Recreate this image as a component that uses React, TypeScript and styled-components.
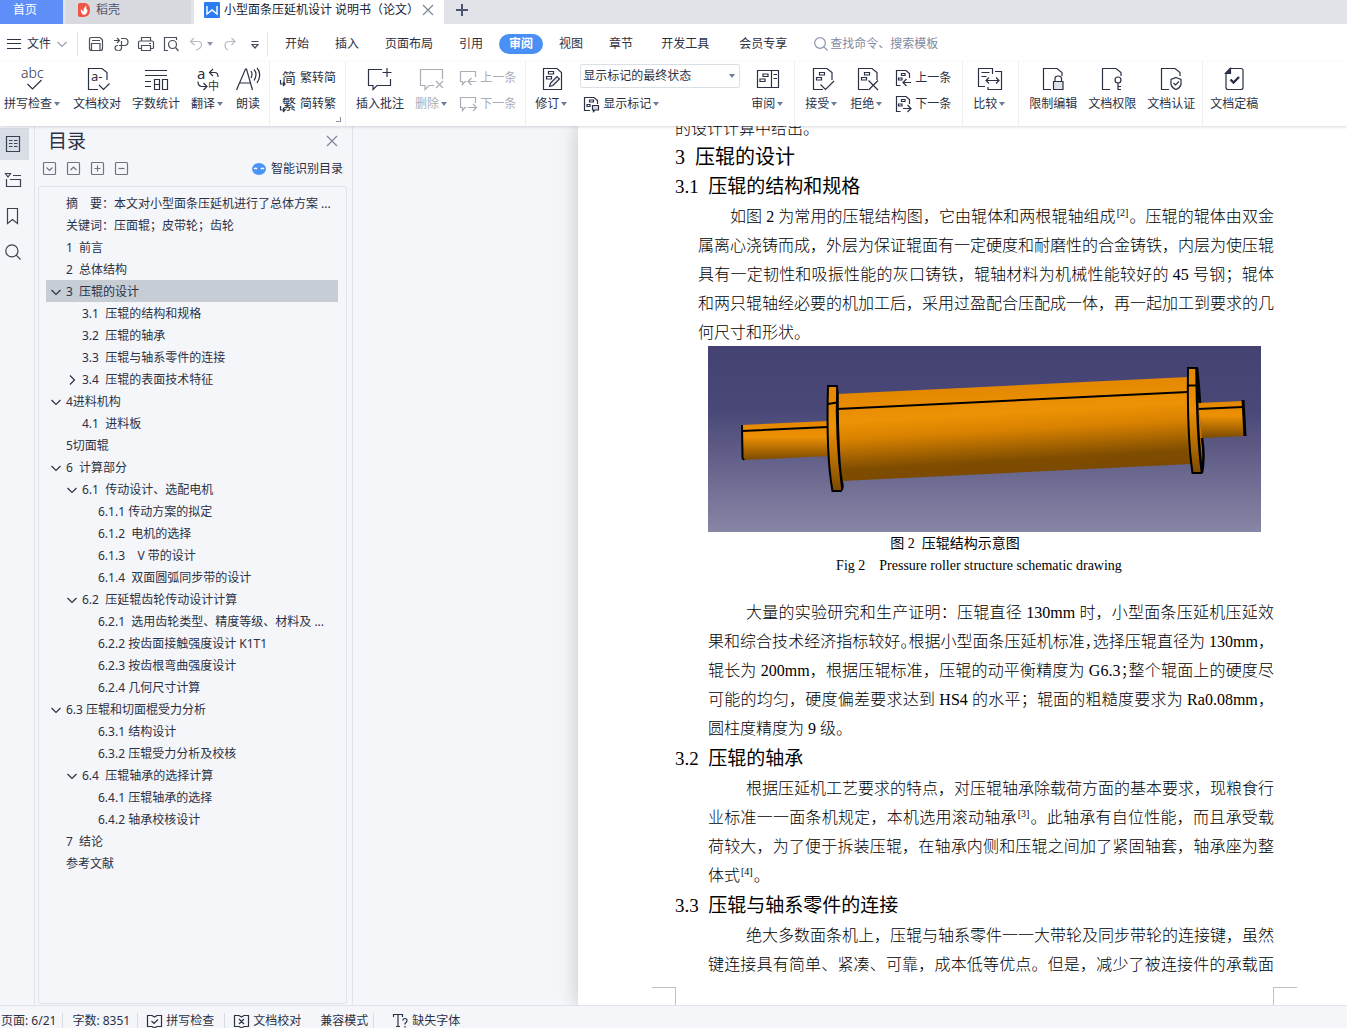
import React from "react";
import styled, { createGlobalStyle, css } from "styled-components";

const ink = "#2b3145";
const uiFont = `"Noto Sans", "Noto Sans CJK SC", sans-serif`;
const docFont = `"Liberation Serif", "Noto Sans CJK SC", serif`;

const Global = createGlobalStyle`
  * { box-sizing: border-box; }
  body { margin: 0; background: #f5f6f9; color: ${ink}; font: 12px/16px ${uiFont}; }
  button, input, select { font: inherit; color: inherit; }
  button { border: 0; padding: 0; background: none; white-space: nowrap; }
  svg { display: block; flex: none; overflow: visible; }
`;

/* ---------- icons ---------- */

type IconProps = { size?: number; w?: number; h?: number; color?: string; children: React.ReactNode };
const Icon = ({ size = 24, w, h, color = "currentColor", children }: IconProps) => (
  <svg width={w ?? size} height={h ?? size} viewBox={`0 0 ${w ?? size} ${h ?? size}`} fill="none" stroke={color} strokeWidth="1.2" aria-hidden="true">
    {children}
  </svg>
);

const IconText = styled.text<{ $size: number; $weight?: number }>`
  font-family: ${uiFont};
  font-size: ${(p) => p.$size}px;
  font-weight: ${(p) => p.$weight ?? 400};
  fill: currentColor;
  stroke: none;
`;

const Caret = ({ color = "#6f7c95" }: { color?: string }) => (
  <svg width="6" height="4" viewBox="0 0 6 4" aria-hidden="true">
    <path d="M0 0h6L3 4z" fill={color} />
  </svg>
);

const OpenPage = <path d="M13 22.5H3.5V1.5H17L22 5.5V13" />;
const Marks = (
  <>
    <path d="M9.5 5.5h5v2.500h-5zM6.500 10.500h5v2.500h-5z" />
  </>
);

const SpellIcon = () => (
  <Icon>
    <IconText $size={14} $weight={300} x="0" y="11">abc</IconText>
    <path d="M6.500 17l5 5 9-9" />
  </Icon>
);
const ProofIcon = () => (
  <Icon>
    {OpenPage}
    <IconText $size={13} x="6" y="14">a-</IconText>
    <path d="M14 18l4.500 4.500 6-6" />
  </Icon>
);
const CountIcon = () => (
  <Icon>
    <path d="M1 3.500h22M1 8.500h22M1 14.500h6M1 19.500h6M10.500 12.500h5v10h-5zM10.500 17.500h5M18.500 12.500h5v10h-5z" />
  </Icon>
);
const TranslateIcon = () => (
  <Icon>
    <IconText $size={15} x="1" y="12">a</IconText>
    <IconText $size={11} x="12" y="23">中</IconText>
    <path d="M17 2l-3.500 3.500L17 9M13.500 5.500H19q3 0 3 4.500M2 14.500q0 5 4 5h4M7.500 16l3.500 3.500L7.500 23" />
  </Icon>
);
const ReadIcon = () => (
  <Icon>
    <path d="M.5 23L9.500 2h1L16.500 23M4 16h10.500" />
    <path d="M15 4q2 3 0 7M18 2.500q4 4.500 0 11M21 1q5.500 6 0 15" />
  </Icon>
);
const HanIcon = ({ glyph }: { glyph: string }) => (
  <Icon size={16}>
    <IconText $size={14} x="2" y="13">{glyph}</IconText>
    <path d="M.5 10v4h4M3 12l2 2-2 2" />
  </Icon>
);
const NoteAddIcon = () => (
  <Icon>
    <path d="M14 2.500H.5V18.500H5V22.500L9 18.500H22.500V12M19 1v9M14.500 5.500h9" />
  </Icon>
);
const NoteDeleteIcon = () => (
  <Icon>
    <path d="M22.500 12V2.500H.5V18.500H5V22.500L9 18.500H14M16 14l7 7M23 14l-7 7" />
  </Icon>
);
const NoteStepIcon = ({ next }: { next?: boolean }) => (
  <Icon size={16}>
    <path d="M15.500 7V1.500H.5V11.500H2.500V14.500L5 11.500H6.500" />
    {next ? <path d="M8 11.500h8M13 8l3.500 3.500L13 15" /> : <path d="M8 11.500h8M11.500 8L8 11.500 11.500 15" />}
  </Icon>
);
const ReviseIcon = () => (
  <Icon>
    <path d="M3.500 1.500H17L21.500 5.500V22.500H3.500zM8.500 4.500h5v2.500h-5zM6.500 9.500h5v2.500h-5z" />
    <path d="M9.500 19.500l1-3.500 6.500-6.500 2.500 2.500-6.500 6.500z" fill="#e4e6ea" />
  </Icon>
);
const ShowMarksIcon = () => (
  <Icon size={16}>
    <path d="M7 14.500H1.500V1.500H11L14.500 4.500V8M6.500 4h4v2h-4zM4 8.500h3v2H4z" />
    <path d="M9.500 9.500h6v4.500H12l-1.500 1.500V14h-1z" fill="#d5d8de" />
  </Icon>
);
const PaneIcon = () => (
  <Icon>
    <path d="M1.500 3.500h21v17h-21zM15.500 3.500v17M17.500 7.500h3.500M17.500 11.500h3.500M7 7h5v2.500H7zM4 12h5v2.500H4z" />
  </Icon>
);
const AcceptIcon = () => (
  <Icon>
    <g>{OpenPage}{Marks}</g>
    <path d="M10.500 17.500l5 5 8.500-8.500" />
  </Icon>
);
const RejectIcon = () => (
  <Icon>
    <g>{OpenPage}{Marks}</g>
    <path d="M13.500 13.500l9.500 9.500M23 13.500l-9.500 9.500" />
  </Icon>
);
const PageStepIcon = ({ next }: { next?: boolean }) => (
  <Icon size={16}>
    <path d="M5.500 15.500H1.500V.5H11L14.500 3.500V8M6.500 3.500h3.500v2H6.500zM3.500 8h3.500v2H3.500z" />
    {next ? <path d="M8 12.500h7.500M12.500 9l3.500 3.500-3.500 3.500" /> : <path d="M8 12.500h8M11.500 9L8 12.500l3.500 3.500" />}
  </Icon>
);
const CompareIcon = () => (
  <Icon>
    <path d="M14.500 7V1.500H.5V19.500H7M10 20v2.500H23.500V4.500H17M3.500 5.500h8M3.500 9.500h5" />
    <path d="M8.500 13.500h12M11 10.500l-3 3 3 3M18 10.500l3 3-3 3" />
  </Icon>
);
const BarePage = <path d="M10 22.500H2.500V1.500H16L21 5.500V9" />;
const LockIcon = () => (
  <Icon>
    {BarePage}
    <path d="M12.500 14.500h9.500v8h-9.500z" fill="#dfe2e6" />
    <path d="M14 14.500v-3q0-2.500 3.200-2.500t3.300 2.500v3" />
  </Icon>
);
const KeyIcon = () => (
  <Icon>
    {BarePage}
    <circle cx="18" cy="13" r="3" />
    <path d="M18 16v6.500h3M18 19.500h3" />
  </Icon>
);
const CertIcon = () => (
  <Icon>
    {BarePage}
    <path d="M17 10.500l5 2v5q-1 3.500-5 5-4-1.500-5-5v-5zM14.500 16l2 2 3.500-3.500" />
  </Icon>
);
const FinalIcon = () => (
  <Icon>
    <path d="M8 1.500H19q2 0 2 2V20.500q0 2-2 2H6q-2 0-2-2V6z" />
    <path d="M8.500 1.500V6.500H3.500z" fill={ink} />
    <path d="M8.500 12.500l3 3 5.500-5.500" strokeWidth="2.400" />
  </Icon>
);

const MenuIcon = () => (
  <Icon w={14} h={12}><path d="M0 1.500h14M0 5.500h14M0 10.500h14" /></Icon>
);
const Chevron = ({ dir = "down", color }: { dir?: "down" | "right"; color?: string }) => (
  <Icon w={10} h={10} color={color}>
    {dir === "down" ? <path d="M.5 3L5 7.500 9.500 3" /> : <path d="M3 .5L7.500 5 3 9.500" />}
  </Icon>
);
const SaveIcon = () => (
  <Icon size={16}><path d="M1.500 3.500q0-2 2-2H12l2.500 2.500V12.500q0 2-2 2h-9q-2 0-2-2zM3.500 14V7.500H12V14M4 4.500h8" /></Icon>
);
const ExportIcon = () => (
  <Icon size={16}><path d="M1 4.500h5M4 2l2.500 2.500L4 7M8 2.500h3.500q3.500 0 3.500 3.500t-3.500 3.500H6M5 14.500q-3 0-3-2.500t3-2.500M8.500 5v7q0 2.500-3 2.500" /></Icon>
);
const PrintIcon = () => (
  <Icon size={16}><path d="M3.500 5V1.500h9V5M3.500 12.500h-2q-1 0-1-1V6.500q0-1.500 1.500-1.500h12q1.500 0 1.500 1.500v5q0 1-1 1h-2M3.500 9.500h9v5h-9zM11 7.500h2" /></Icon>
);
const PreviewIcon = () => (
  <Icon size={16}><path d="M5 14.500H1.500V1.500H13.500V4" /><circle cx="9.500" cy="8.500" r="4" /><path d="M12.500 11.500l3 3.500" /></Icon>
);
const UndoIcon = () => (
  <Icon size={16} color="#b9bcc4"><path d="M6 2L2.500 5.500 6.500 9M2.500 5.500H10q3.500 0 3.500 3.500T8 14" /></Icon>
);
const RedoIcon = () => (
  <Icon size={16} color="#b9bcc4"><path d="M9.500 2L13 5.500 9.500 9M13 5.500H7q-4 0-4 4 0 3 3 4.500" /></Icon>
);
const MoreIcon = () => (
  <Icon size={16}><path d="M4.500 5.500h7M5 8.500h6L8 12z" /></Icon>
);
const SearchIcon = ({ size = 16, color }: { size?: number; color?: string }) => (
  <Icon size={size} color={color}>
    <circle cx={size * 0.43} cy={size * 0.43} r={size * 0.38} />
    <path d={`M${size * 0.7} ${size * 0.7}L${size - 0.5} ${size - 0.5}`} />
  </Icon>
);
const CloseIcon = ({ color = "#7e8798" }: { color?: string }) => (
  <Icon size={10} color={color}><path d="M0 0l10 10M10 0L0 10" /></Icon>
);

/* ---------- shell ---------- */

const Shell = styled.div`
  display: flex;
  flex-direction: column;
  height: 100vh;
  overflow: hidden;
`;

const TabStrip = styled.header`
  display: flex;
  gap: 3px;
  flex: none;
  height: 24px;
  background: #e2e3e8;
`;

const DocTab = styled.button<{ $kind: "home" | "idle" | "active" }>`
  display: flex;
  align-items: center;
  gap: 6px;
  padding: 0 12px 4px;
  ${(p) => p.$kind === "home" && css`width: 63px; padding-left: 13px; background: #5f8ef8; color: #fff;`}
  ${(p) => p.$kind === "idle" && css`width: 125px; background: #d9dae0; color: #50566a;`}
  ${(p) => p.$kind === "active" && css`width: 250px; padding: 0 10px 4px; gap: 4px; background: #fff; color: #1b2130;`}
`;

const NewTab = styled.button`
  padding: 0 9px 5px;
  color: #4a5570;
`;

const MenuBar = styled.div`
  display: flex;
  align-items: center;
  flex: none;
  height: 38px;
  padding: 2px 0 0 7px;
  background: #fff;
`;

const FileButton = styled.button`
  display: flex;
  align-items: center;
  gap: 6px;
`;

const BarRule = styled.span<{ $gap: number }>`
  width: 1px;
  height: 24px;
  margin: 0 ${(p) => p.$gap}px;
  background: #e0e2e6;
`;

const QuickTools = styled.div`
  display: flex;
  align-items: center;
  gap: 9px;
  color: #4a4f5c;
`;

const UndoGroup = styled.button`
  display: flex;
  align-items: center;
  gap: 3px;
`;

const MenuTab = styled.button<{ $active?: boolean; $wide?: boolean }>`
  padding: 0 ${(p) => (p.$wide ? 15 : 13)}px;
  line-height: 20px;
  ${(p) => p.$active && css`
    margin: 0 3px;
    padding: 0 10px;
    border-radius: 10px;
    background: #4a8ff3;
    color: #fff;
    font-weight: 700;
  `}
`;

const SearchField = styled.label`
  display: flex;
  align-items: center;
  gap: 2px;
  flex: 1;
  min-width: 0;
  margin-left: 12px;
  color: #8b97ad;
`;

const SearchInput = styled.input`
  flex: 1;
  min-width: 0;
  padding: 0;
  border: 0;
  outline: 0;
  background: none;
  &::placeholder { color: #7f8ba3; opacity: 1; }
`;

/* ---------- ribbon ---------- */

const Ribbon = styled.div`
  display: flex;
  position: relative;
  z-index: 1;
  flex: none;
  height: 64px;
  background: #fff;
  box-shadow: 0 1px 3px rgba(60, 66, 80, 0.2);
`;

const Group = styled.div<{ $start?: number; $end?: number }>`
  display: flex;
  gap: 11px;
  position: relative;
  padding: 0 ${(p) => p.$end ?? 9}px 0 ${(p) => p.$start ?? 10}px;
  border-right: 1px solid #eceef1;
  &:last-child { border-right: 0; }
`;

const Corner = styled.span`
  position: absolute;
  right: 4px;
  bottom: 4px;
  width: 5px;
  height: 5px;
  border: solid #8a92a3;
  border-width: 0 1px 1px 0;
`;

const BigButton = styled.button`
  display: flex;
  flex-direction: column;
  align-items: center;
  gap: 5px;
  padding-top: 5px;
  &:disabled { color: #a9adb6; }
`;

const Label = styled.span<{ $menu?: boolean }>`
  display: flex;
  align-items: center;
  gap: 2px;
  padding-right: ${(p) => (p.$menu ? 2 : 0)}px;
`;

const Stack = styled.div`
  display: flex;
  flex-direction: column;
  padding-top: 2px;
`;

const SmallButton = styled.button`
  display: flex;
  align-items: center;
  gap: 4px;
  height: 26px;
  padding-top: 2px;
  &:disabled { color: #a9adb6; }
`;

const SelectBox = styled.div`
  display: grid;
  align-items: center;
  width: 160px;
  height: 24px;
  margin-bottom: 2px;
  border: 1px solid #dcdfe4;
  border-radius: 2px;
  > * { grid-area: 1 / 1; }
  > svg { justify-self: end; margin-right: 4px; pointer-events: none; }
`;

const Select = styled.select`
  appearance: none;
  width: 100%;
  padding: 0 12px 0 2px;
  border: 0;
  background: none;
  outline: 0;
`;

const MarksButton = styled(SmallButton)`
  padding-left: 3px;
`;

type BigProps = { icon: React.ReactNode; text: string; menu?: boolean; disabled?: boolean };
const Big = ({ icon, text, menu, disabled }: BigProps) => (
  <BigButton disabled={disabled}>
    {icon}
    <Label $menu={menu}>
      {text}
      {menu && <Caret />}
    </Label>
  </BigButton>
);

/* ---------- side ---------- */

const Work = styled.main`
  display: flex;
  flex: 1;
  min-height: 0;
`;

const Rail = styled.nav`
  display: flex;
  flex-direction: column;
  gap: 4px;
  flex: none;
  width: 35px;
  padding-top: 2px;
  border-right: 1px solid #e0e3e9;
`;

const RailButton = styled.button<{ $active?: boolean }>`
  display: flex;
  align-items: center;
  width: 29px;
  height: 32px;
  padding-left: 5px;
  color: #3b4254;
  background: ${(p) => (p.$active ? "#d9dde5" : "transparent")};
`;

const Panel = styled.aside`
  display: flex;
  flex-direction: column;
  flex: none;
  width: 318px;
  padding: 0 5px 0 3px;
  border-right: 1px solid #e0e3e9;
`;

const PanelHead = styled.div`
  display: flex;
  align-items: center;
  justify-content: space-between;
  height: 30px;
  padding: 0 10px;
`;

const PanelTitle = styled.h2`
  margin: 0;
  font-size: 19px;
  line-height: 30px;
  font-weight: 400;
`;

const PanelTools = styled.div`
  display: flex;
  align-items: center;
  gap: 11px;
  height: 24px;
  margin-bottom: 6px;
  padding: 0 4px 0 5px;
  color: #6d7585;
`;

const SmartButton = styled.button`
  display: flex;
  align-items: center;
  gap: 5px;
  margin-left: auto;
  padding-top: 1px;
  color: ${ink};
`;

const Tree = styled.ul`
  flex: 1;
  min-height: 0;
  margin: 0 0 1px;
  padding: 5px 8px 0 7px;
  border: 1px solid #e0e3e9;
  border-radius: 3px;
  list-style: none;
  overflow: hidden;
`;

const TreeItem = styled.button<{ $level: number; $active?: boolean }>`
  display: flex;
  align-items: center;
  gap: 5px;
  width: 100%;
  height: 22px;
  padding: 2px 0 0 ${(p) => 5 + p.$level * 16}px;
  white-space: pre;
  background: ${(p) => (p.$active ? "#c6cdd5" : "transparent")};
`;

const Twist = styled.span`
  width: 10px;
  height: 10px;
`;

/* ---------- document ---------- */

const Canvas = styled.section`
  display: flex;
  flex: 1;
  min-width: 0;
  padding-left: 225px;
  overflow: hidden;
`;

const Paper = styled.article`
  flex: 1;
  min-width: 0;
  padding: 0 73px 0 97px;
  background: #fff;
  box-shadow: 0 0 18px rgba(70, 76, 88, 0.3);
  color: #000;
  font-family: ${docFont};
`;

const Chapter = styled.h1`
  margin: 0;
  font-size: 20px;
  line-height: 28px;
  font-weight: 400;
  white-space: pre;
`;

const Section = styled.h2`
  margin: 1px 0 0;
  font-size: 19px;
  line-height: 30px;
  font-weight: 400;
  white-space: pre;
`;

const Para = styled.p<{ $inset: number }>`
  margin: 0 0 0 ${(p) => p.$inset}px;
  font-size: 16px;
  line-height: 29px;
  font-weight: 300;
`;

const Carried = styled(Para)`
  margin-top: -12px;
`;

const Line = styled.span<{ $indent?: number; $last?: boolean }>`
  display: block;
  height: 29px;
  padding-left: ${(p) => p.$indent ?? 0}px;
  white-space: nowrap;
  text-align: justify;
  text-align-last: ${(p) => (p.$last ? "left" : "justify")};
`;

const Tight = styled.span`
  font-feature-settings: "halt";
`;

const Ref = styled.sup`
  padding: 0 1px;
  font-size: 10px;
  line-height: 10px;
  vertical-align: 6px;
`;

const Figure = styled.figure`
  margin: -1px 0 21px 33px;
  font-size: 14px;
  line-height: 22px;
`;

const Caption = styled.figcaption`
  display: flex;
  flex-direction: column;
  align-items: center;
  width: 542px;
  max-width: 100%;
  padding-top: 1px;
  white-space: pre;
`;

const CaptionCn = styled.span`
  padding-right: 48px;
`;

const CropMarks = styled.div`
  display: flex;
  justify-content: space-between;
  margin: 8px -23px 0;
`;

const Crop = styled.span<{ $side: "left" | "right" }>`
  width: 24px;
  height: 20px;
  border-top: 1px solid #bfc1c5;
  border-${(p) => (p.$side === "left" ? "right" : "left")}: 1px solid #bfc1c5;
`;

const Roller = () => (
  <svg width="553" height="186" viewBox="0 0 553 186" role="img" aria-label="压辊结构示意图">
    <defs>
      <linearGradient id="sky" x1="0" y1="0" x2="0" y2="1">
        <stop offset="0" stopColor="#434272" />
        <stop offset="0.35" stopColor="#4a4877" />
        <stop offset="1" stopColor="#8886a5" />
      </linearGradient>
      <linearGradient id="drum" gradientUnits="userSpaceOnUse" x1="303" y1="40" x2="308" y2="127">
        <stop offset="0" stopColor="#e38800" />
        <stop offset="0.3" stopColor="#ee9205" />
        <stop offset="0.5" stopColor="#d98200" />
        <stop offset="0.85" stopColor="#7f4d00" />
        <stop offset="1" stopColor="#7b4a00" />
      </linearGradient>
      <linearGradient id="shaft" x1="0" y1="0" x2="0" y2="1">
        <stop offset="0" stopColor="#e38800" />
        <stop offset="0.4" stopColor="#ec9004" />
        <stop offset="1" stopColor="#7b4a00" />
      </linearGradient>
    </defs>
    <path d="M0 0h553v186H0z" fill="url(#sky)" />
    <path d="M34 79L120 75 121 110 36 114z" fill="url(#shaft)" />
    <path d="M34 79L34.500 112 36 114M34 85L120 81" stroke="#000" strokeWidth="2" fill="none" />
    <path d="M490 57L535 55 537 90 494 92z" fill="url(#shaft)" />
    <path d="M490 63L535 61" stroke="#000" strokeWidth="2" />
    <path d="M535 54L537 90" stroke="#000" strokeWidth="3" />
    <path d="M129 48L480 31 483 118 134 135z" fill="url(#drum)" />
    <path d="M129 63L480 46" stroke="#000" strokeWidth="2" />
    <path d="M120 40H129L129 63 131 100 134 145H125Q119 115 120 40z" fill="url(#shaft)" />
    <path d="M129 40H120Q118 110 124.500 145H133M120 58L129 56.500" stroke="#000" strokeWidth="2" fill="none" />
    <path d="M129 39Q127 90 134 144 136 140 134 135 130 110 130 48z" fill="#000" stroke="#000" strokeWidth="1.500" />
    <path d="M480 22H489L490 58 495 100V126L484 128 481 90z" fill="url(#shaft)" />
    <path d="M489 22H480Q479 90 484.500 127H494M480 39.500H489" stroke="#000" strokeWidth="2" fill="none" />
    <path d="M488.500 21Q489 90 494 127 497 110 494 92M489 22Q491 40 492 57" stroke="#000" strokeWidth="2.500" fill="none" />
  </svg>
);

/* ---------- status ---------- */

const StatusBar = styled.footer`
  display: flex;
  flex: none;
  height: 23px;
  padding: 7px 0 0 1px;
  border-top: 1px solid #e0e3e9;
  background: #f5f6f9;
`;

const StatusItem = styled.button<{ $before?: number; $after?: number; $rule?: boolean }>`
  display: flex;
  align-items: center;
  gap: 4px;
  height: 15px;
  padding: 0 ${(p) => p.$after ?? 10}px 0 ${(p) => p.$before ?? 9}px;
  border-right: ${(p) => (p.$rule ? "1px solid #d9dce2" : "0")};
`;

const entries: { level: number; text: string; twist?: "down" | "right"; active?: boolean }[] = [
  { level: 0, text: "摘　要：本文对小型面条压延机进行了总体方案 ..." },
  { level: 0, text: "关键词：压面辊；皮带轮；齿轮" },
  { level: 0, text: "1  前言" },
  { level: 0, text: "2  总体结构" },
  { level: 0, text: "3  压辊的设计", twist: "down", active: true },
  { level: 1, text: "3.1  压辊的结构和规格" },
  { level: 1, text: "3.2  压辊的轴承" },
  { level: 1, text: "3.3  压辊与轴系零件的连接" },
  { level: 1, text: "3.4  压辊的表面技术特征", twist: "right" },
  { level: 0, text: "4进料机构", twist: "down" },
  { level: 1, text: "4.1  进料板" },
  { level: 0, text: "5切面辊" },
  { level: 0, text: "6  计算部分", twist: "down" },
  { level: 1, text: "6.1  传动设计、选配电机", twist: "down" },
  { level: 2, text: "6.1.1 传动方案的拟定" },
  { level: 2, text: "6.1.2  电机的选择" },
  { level: 2, text: "6.1.3    V 带的设计" },
  { level: 2, text: "6.1.4  双面圆弧同步带的设计" },
  { level: 1, text: "6.2  压延辊齿轮传动设计计算", twist: "down" },
  { level: 2, text: "6.2.1  选用齿轮类型、精度等级、材料及 ..." },
  { level: 2, text: "6.2.2 按齿面接触强度设计 K1T1" },
  { level: 2, text: "6.2.3 按齿根弯曲强度设计" },
  { level: 2, text: "6.2.4 几何尺寸计算" },
  { level: 0, text: "6.3 压辊和切面棍受力分析", twist: "down" },
  { level: 2, text: "6.3.1 结构设计" },
  { level: 2, text: "6.3.2 压辊受力分析及校核" },
  { level: 1, text: "6.4  压辊轴承的选择计算", twist: "down" },
  { level: 2, text: "6.4.1 压辊轴承的选择" },
  { level: 2, text: "6.4.2 轴承校核设计" },
  { level: 0, text: "7  结论" },
  { level: 0, text: "参考文献" },
];

const boxGlyphs = [
  ["全部展开", "M3.500 5.500l3 3 3-3"],
  ["全部收起", "M3.500 8l3-3 3 3"],
  ["放大级别", "M3.500 6.500h6M6.500 3.500v6"],
  ["缩小级别", "M3.500 6.500h6"],
];

export default function App() {
  return (
    <Shell>
      <Global />
      <TabStrip>
        <DocTab $kind="home">首页</DocTab>
        <DocTab $kind="idle">
          <svg width="12" height="14" viewBox="0 0 12 14" aria-hidden="true">
            <path d="M0 2Q0 0 2 0H7Q12 1 12 7T6 14H2Q0 14 0 12z" fill="#ee5544" />
            <path d="M6 12Q2 10 3 6l2.500 3Q5 5 8.500 2.500 7.500 6 9.500 7 9.500 11 6 12z" fill="#fff" />
          </svg>
          稻壳
        </DocTab>
        <DocTab $kind="active">
          <svg width="16" height="16" viewBox="0 0 16 16" aria-hidden="true">
            <rect width="16" height="16" rx="1" fill="#2b7cf0" />
            <path d="M3 4v8l5-4 5 4V4" fill="none" stroke="#fff" strokeWidth="1.400" />
          </svg>
          小型面条压延机设计 说明书（论文）
          <CloseIcon />
        </DocTab>
        <NewTab aria-label="新建">
          <Icon w={12} h={12}><path d="M6 0v12M0 6h12" strokeWidth="2" /></Icon>
        </NewTab>
      </TabStrip>

      <MenuBar>
        <FileButton>
          <MenuIcon />
          文件
          <Chevron color="#9a9fab" />
        </FileButton>
        <BarRule $gap={10} />
        <QuickTools>
          <button aria-label="保存"><SaveIcon /></button>
          <button aria-label="输出"><ExportIcon /></button>
          <button aria-label="打印"><PrintIcon /></button>
          <button aria-label="打印预览"><PreviewIcon /></button>
          <UndoGroup aria-label="撤销"><UndoIcon /><Caret color="#8d96a8" /></UndoGroup>
          <button aria-label="恢复"><RedoIcon /></button>
          <button aria-label="更多"><MoreIcon /></button>
        </QuickTools>
        <BarRule $gap={4} />
        {["开始", "插入", "页面布局", "引用", "审阅", "视图", "章节", "开发工具", "会员专享"].map((t, i) => (
          <MenuTab key={t} $active={t === "审阅"} $wide={i > 6}>{t}</MenuTab>
        ))}
        <SearchField>
          <SearchIcon size={14} />
          <SearchInput aria-label="查找命令、搜索模板" placeholder="查找命令、搜索模板" />
        </SearchField>
      </MenuBar>

      <Ribbon>
        <Group $start={4}>
          <Big icon={<SpellIcon />} text="拼写检查" menu />
          <Big icon={<ProofIcon />} text="文档校对" />
          <Big icon={<CountIcon />} text="字数统计" />
          <Big icon={<TranslateIcon />} text="翻译" menu />
          <Big icon={<ReadIcon />} text="朗读" />
        </Group>
        <Group>
          <Stack>
            <SmallButton><HanIcon glyph="简" />繁转简</SmallButton>
            <SmallButton><HanIcon glyph="繁" />简转繁</SmallButton>
          </Stack>
          <Corner />
        </Group>
        <Group>
          <Big icon={<NoteAddIcon />} text="插入批注" />
          <Big icon={<NoteDeleteIcon />} text="删除" menu disabled />
          <Stack>
            <SmallButton disabled><NoteStepIcon />上一条</SmallButton>
            <SmallButton disabled><NoteStepIcon next />下一条</SmallButton>
          </Stack>
        </Group>
        <Group $start={9}>
          <Big icon={<ReviseIcon />} text="修订" menu />
          <Stack>
            <SelectBox>
              <Select aria-label="标记状态" defaultValue="final">
                <option value="final">显示标记的最终状态</option>
              </Select>
              <Caret />
            </SelectBox>
            <MarksButton><ShowMarksIcon /><Label>显示标记<Caret /></Label></MarksButton>
          </Stack>
          <Big icon={<PaneIcon />} text="审阅" menu />
        </Group>
        <Group $end={11}>
          <Big icon={<AcceptIcon />} text="接受" menu />
          <Big icon={<RejectIcon />} text="拒绝" menu />
          <Stack>
            <SmallButton><PageStepIcon />上一条</SmallButton>
            <SmallButton><PageStepIcon next />下一条</SmallButton>
          </Stack>
        </Group>
        <Group $end={11}>
          <Big icon={<CompareIcon />} text="比较" menu />
        </Group>
        <Group $end={7}>
          <Big icon={<LockIcon />} text="限制编辑" />
          <Big icon={<KeyIcon />} text="文档权限" />
          <Big icon={<CertIcon />} text="文档认证" />
        </Group>
        <Group $start={7}>
          <Big icon={<FinalIcon />} text="文档定稿" />
        </Group>
      </Ribbon>

      <Work>
        <Rail>
          <RailButton $active aria-label="目录">
            <Icon size={16}><path d="M1.500.5h13v15h-13zM4 4.500h3.500M4 7.500h3.500M4 10.500h3.500M9 4.500h3.500M9 7.500h3.500M9 10.500h3.500" /></Icon>
          </RailButton>
          <RailButton aria-label="章节">
            <Icon size={16}><path d="M.5 1.500h5L3 5zM8 3.500h8M1.500 7v7.500h14V7.500H5" /></Icon>
          </RailButton>
          <RailButton aria-label="书签">
            <Icon size={16}><path d="M2.500.5h10v15l-5-4-5 4z" /></Icon>
          </RailButton>
          <RailButton aria-label="查找"><SearchIcon /></RailButton>
        </Rail>

        <Panel>
          <PanelHead>
            <PanelTitle>目录</PanelTitle>
            <button aria-label="关闭"><CloseIcon /></button>
          </PanelHead>
          <PanelTools>
            {boxGlyphs.map(([name, d]) => (
              <button key={name} aria-label={name}>
                <Icon size={13}><rect x=".5" y=".5" width="12" height="12" rx="1" /><path d={d} /></Icon>
              </button>
            ))}
            <SmartButton>
              <svg width="14" height="12" viewBox="0 0 14 12" aria-hidden="true">
                <ellipse cx="7" cy="6" rx="7" ry="6" fill="#4a94f5" />
                <path d="M2 6q1.500-1.500 3 0M9 6q1.500-1.500 3 0" stroke="#fff" strokeWidth="1.500" fill="none" />
              </svg>
              智能识别目录
            </SmartButton>
          </PanelTools>
          <Tree>
            {entries.map((e) => (
              <li key={e.text}>
                <TreeItem $level={e.level} $active={e.active}>
                  <Twist>{e.twist && <Chevron dir={e.twist} />}</Twist>
                  {e.text}
                </TreeItem>
              </li>
            ))}
          </Tree>
        </Panel>

        <Canvas>
          <Paper>
            <Carried $inset={0}><Line $last>的设计计算中给出。</Line></Carried>
            <Chapter>3  压辊的设计</Chapter>
            <Section>3.1  压辊的结构和规格</Section>
            <Para $inset={23}>
              <Line $indent={32}>如图 2 为常用的压辊结构图，它由辊体和两根辊轴组成<Ref>[2]</Ref>。压辊的辊体由双金</Line>
              <Line>属离心浇铸而成，外层为保证辊面有一定硬度和耐磨性的合金铸铁，内层为使压辊</Line>
              <Line>具有一定韧性和吸振性能的灰口铸铁，辊轴材料为机械性能较好的 45 号钢；辊体</Line>
              <Line>和两只辊轴经必要的机加工后，采用过盈配合压配成一体，再一起加工到要求的几</Line>
              <Line $last>何尺寸和形状。</Line>
            </Para>
            <Figure>
              <Roller />
              <Caption>
                <CaptionCn>图 2  压辊结构示意图</CaptionCn>
                <span>Fig 2    Pressure roller structure schematic drawing</span>
              </Caption>
            </Figure>
            <Para $inset={33}>
              <Line $indent={38}>大量的实验研究和生产证明：压辊直径 130mm 时，小型面条压延机压延效</Line>
              <Line>果和综合技术经济指标较好<Tight>。</Tight>根据小型面条压延机标准<Tight>，</Tight>选择压辊直径为 130mm，</Line>
              <Line>辊长为 200mm，根据压辊标准，压辊的动平衡精度为 G6.3<Tight>；</Tight>整个辊面上的硬度尽</Line>
              <Line>可能的均匀，硬度偏差要求达到 HS4 的水平；辊面的粗糙度要求为 Ra0.08mm，</Line>
              <Line $last>圆柱度精度为 9 级。</Line>
            </Para>
            <Section>3.2  压辊的轴承</Section>
            <Para $inset={33}>
              <Line $indent={38}>根据压延机工艺要求的特点，对压辊轴承除载荷方面的基本要求，现粮食行</Line>
              <Line>业标准一一面条机规定，本机选用滚动轴承<Ref>[3]</Ref>。此轴承有自位性能，而且承受载</Line>
              <Line>荷较大，为了便于拆装压辊，在轴承内侧和压辊之间加了紧固轴套，轴承座为整</Line>
              <Line $last>体式<Ref>[4]</Ref>。</Line>
            </Para>
            <Section>3.3  压辊与轴系零件的连接</Section>
            <Para $inset={33}>
              <Line $indent={38}>绝大多数面条机上，压辊与轴系零件一一大带轮及同步带轮的连接键，虽然</Line>
              <Line>键连接具有简单、紧凑、可靠，成本低等优点。但是，减少了被连接件的承载面</Line>
            </Para>
            <CropMarks><Crop $side="left" /><Crop $side="right" /></CropMarks>
          </Paper>
        </Canvas>
      </Work>

      <StatusBar>
        <StatusItem $before={0} $after={6} $rule>页面: 6/21</StatusItem>
        <StatusItem $after={7} $rule>字数: 8351</StatusItem>
        <StatusItem $rule>
          <Icon w={15} h={14}><path d="M5 1.500H.5v11H5l2.500 1.500 2.500-1.500h4.500v-11H10L7.500 3zM4.500 7l2.500 2.500L11 5.500" /></Icon>
          拼写检查
        </StatusItem>
        <StatusItem>
          <Icon w={15} h={14}><path d="M5 1.500H.5v11H5l2.500 1.500 2.500-1.500h4.500v-11H10L7.500 3zM5 5l5 5M10 5l-5 5" /></Icon>
          文档校对
        </StatusItem>
        <StatusItem $after={5} $rule>兼容模式</StatusItem>
        <StatusItem $before={19}>
          <Icon w={15} h={14}>
            <path d="M.5 3V.5h9V3M5 .5v12M3 12.500h4M10 6.500q0-2 2-2t2 2q0 1.500-2 3v1M12 12v1.500" />
          </Icon>
          缺失字体
        </StatusItem>
      </StatusBar>
    </Shell>
  );
}
